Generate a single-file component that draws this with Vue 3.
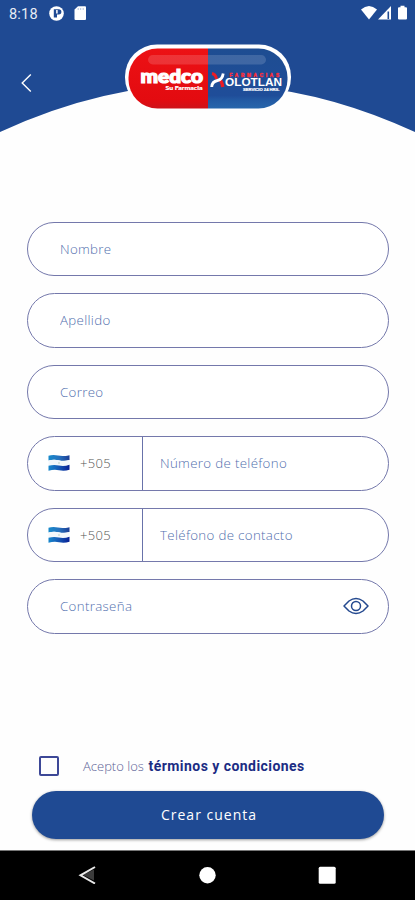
<script setup>
import { ref } from 'vue'

const fields = [
  { id: 'nombre', label: 'Nombre', type: 'text' },
  { id: 'apellido', label: 'Apellido', type: 'text' },
  { id: 'correo', label: 'Correo', type: 'email' },
  { id: 'telefono', label: 'Número de teléfono', type: 'tel', prefix: '+505' },
  { id: 'contacto', label: 'Teléfono de contacto', type: 'tel', prefix: '+505' },
  { id: 'clave', label: 'Contraseña', type: 'password', secret: true },
]
const accepted = ref(false)
const visible = ref(false)
</script>

<template>
  <div class="screen">
    <header class="header">
      <svg class="curve" viewBox="0 0 415 133" aria-hidden="true">
        <path d="M0 0H415V132Q207.500 36 0 132Z" fill="#1f4a93" />
      </svg>
      <div class="status">
        <span class="time">8:18</span>
        <svg class="status-left" viewBox="0 0 40 16">
          <circle cx="7.500" cy="8.500" r="7.300" fill="#fff" />
          <path d="M4.800 4.200h5a2.500 2.500 0 0 1 0 5.200H8v3H4.800z" fill="#1f4a93" />
          <path d="M7.900 5v3.600" stroke="#fff" stroke-width="1.500" />
          <path d="M29 1.200H36q1 0 1 1V14q0 1-1 1H26.500q-1 0-1-1V4.500z" fill="#fff" />
          <path d="M29.200 3v2M31.700 3v2M34.200 3v2" stroke="#9eb2d6" stroke-width=".8" />
        </svg>
        <svg class="status-right" viewBox="0 0 48 16">
          <path d="M0 4.500Q8 -2.500 16 4.500L8 14.500Z" fill="#fff" />
          <path d="M17 14.500L30 1V14.500Z" fill="#fff" />
          <path d="M27.300 6.500V14" stroke="#1f4a93" stroke-width="1.600" />
          <path d="M39.500 .7h4v1.600h1.500q1 0 1 1V13.500q0 1-1 1h-7q-1 0-1-1V3.300q0-1 1-1h1.500z" fill="#fff" />
        </svg>
      </div>
      <div class="brand-row">
        <button class="back" type="button" aria-label="Volver">
          <svg viewBox="0 0 12 20"><path d="M10.800 1.500L2.200 10L10.800 18.500" fill="none" stroke="#fff" stroke-width="1.400" /></svg>
        </button>
        <svg class="logo" viewBox="0 0 168 66">
          <defs>
            <clipPath id="capsule"><rect x="4.500" y="4.500" width="159" height="60" rx="29" /></clipPath>
            <linearGradient id="redFill" x2="0" y2="1">
              <stop offset="0" stop-color="#ed1215" />
              <stop offset=".85" stop-color="#e30b10" />
              <stop offset="1" stop-color="#c9131b" />
            </linearGradient>
            <linearGradient id="blueFill" x2="0" y2="1">
              <stop offset="0" stop-color="#1e4d91" />
              <stop offset=".78" stop-color="#1f4d99" />
              <stop offset=".86" stop-color="#235ba4" />
              <stop offset="1" stop-color="#2969ad" />
            </linearGradient>
          </defs>
          <rect x="1" y=".5" width="166" height="65" rx="32" fill="#fff" />
          <g clip-path="url(#capsule)">
            <rect width="84" height="66" fill="url(#redFill)" />
            <rect x="84" width="84" height="66" fill="url(#blueFill)" />
          </g>
          <rect x="24" y="11" width="118" height="9.500" rx="4.700" fill="#fff" opacity=".15" />
          <text class="medco" x="16.500" y="38.500" textLength="62.500" lengthAdjust="spacingAndGlyphs">medco</text>
          <text class="tagline" x="41.500" y="45.500" textLength="37" lengthAdjust="spacingAndGlyphs">Su Farmacia</text>
          <text class="farmacias" x="105.500" y="33.100" textLength="49.500">FARMACIAS</text>
          <path d="M88 29.500Q91.500 30 92.500 35" stroke="#ed1b24" stroke-width="3" fill="none" />
          <path d="M95.500 36Q98 37 98.700 43" stroke="#ed1b24" stroke-width="3.400" fill="none" />
          <path d="M87.700 43Q88 37.500 93.500 36.500Q98.500 35.500 99.200 29.500" stroke="#fff" stroke-width="2.800" fill="none" />
          <text class="xolotlan" x="101" y="42.300" textLength="57" lengthAdjust="spacingAndGlyphs">OLOTLAN</text>
          <text class="slogan" x="119" y="46.800" textLength="36.500" lengthAdjust="spacingAndGlyphs">SERVICIO 24 HRS.</text>
        </svg>
      </div>
    </header>

    <form class="form" @submit.prevent>
      <div v-for="f in fields" :key="f.id" class="field">
        <div v-if="f.prefix" class="prefix">
          <svg class="flag" viewBox="0 0 22 18">
            <defs>
              <linearGradient id="flagBlue">
                <stop offset="0" stop-color="#168acb" />
                <stop offset=".5" stop-color="#2672bf" />
                <stop offset="1" stop-color="#1d3e95" />
              </linearGradient>
              <linearGradient id="flagDeep">
                <stop offset="0" stop-color="#1687cc" />
                <stop offset=".5" stop-color="#1557b5" />
                <stop offset="1" stop-color="#071f94" />
              </linearGradient>
            </defs>
            <path d="M.5 1.800Q5 .5 10 1.600T21.500 1.200V6Q16 7.500 11 6.300T.5 6.500Z" fill="url(#flagBlue)" />
            <path d="M.5 6.500Q6 5 11 6.500T21.500 6V11Q16 12.500 11 11.500T.5 12Z" fill="#f3f7fb" />
            <path d="M.5 11.800Q6 10.300 11 11.600T21.500 10.800V15.800Q16 17.300 11 16.200T.5 16.800Z" fill="url(#flagDeep)" />
            <circle cx="11" cy="9" r=".8" fill="#b7cfbf" />
          </svg>
          <span>{{ f.prefix }}</span>
        </div>
        <input
          :class="{ phone: f.prefix }"
          :type="f.secret && visible ? 'text' : f.type"
          :placeholder="f.label"
          :aria-label="f.label"
        />
        <button v-if="f.secret" class="eye" type="button" aria-label="Mostrar" @click="visible = !visible">
          <svg viewBox="0 0 26 18" fill="none" stroke="#24498f" stroke-width="1.500">
            <path d="M1 9L6 4Q9.500 1.500 13 1.500T20 4L25 9L20 14Q16.500 16.500 13 16.500T6 14Z" stroke-linejoin="round" />
            <circle cx="13" cy="9" r="4.500" />
          </svg>
        </button>
      </div>

      <label class="terms">
        <input v-model="accepted" type="checkbox" />
        <span class="accept">Acepto los</span>
        <strong>términos y condiciones</strong>
      </label>
      <button class="submit" type="submit">Crear cuenta</button>
    </form>

    <nav class="navbar">
      <svg viewBox="0 0 18 18">
        <path d="M16 3.500L5 9L16 14.500Z" fill="#3b3b3b" />
        <path d="M17 1L2.500 9.300L17 17.500" fill="none" stroke="#e8e8e8" stroke-width="2" />
      </svg>
      <svg viewBox="0 0 18 18"><circle cx="9.500" cy="9.300" r="8.200" fill="#fff" /></svg>
      <svg viewBox="0 0 18 18"><rect x=".7" y=".8" width="17" height="17" rx="1.500" fill="#fff" /></svg>
    </nav>
  </div>
</template>

<style>
body {
  background: #fff;
}
</style>

<style scoped>
.screen {
  width: 415px;
  height: 900px;
  display: flex;
  flex-direction: column;
  overflow: hidden;
  background: #fefefe;
  font-family: "Open Sans", "Noto Sans", sans-serif;
}
.screen * {
  box-sizing: border-box;
}
svg {
  display: block;
}
button {
  border: 0;
  background: none;
  padding: 0;
  font: inherit;
}
.header {
  position: relative;
  height: 221.5px;
  flex: none;
}
.curve {
  position: absolute;
  inset: 0 0 auto;
  width: 415px;
  height: 133px;
}
.status,
.brand-row {
  position: relative;
  display: flex;
}
.status {
  height: 44px;
  padding: 5px 6px 0 9px;
}
.time {
  width: 40px;
  font: 14.5px/19px Roboto, sans-serif;
  letter-spacing: 0.2px;
  color: #e7ecf5;
}
.status-left {
  width: 40px;
  height: 16px;
}
.status-right {
  width: 48px;
  height: 16px;
  margin-left: auto;
}
.brand-row {
  padding-left: 20px;
}
.back {
  width: 104px;
  height: 66px;
  padding: 12px 0 0 0;
}
.back svg {
  width: 12px;
  height: 20px;
}
.logo {
  width: 168px;
  height: 66px;
}
.medco {
  font: 900 18px "Lato", sans-serif;
  fill: #fff;
  stroke: #fff;
  stroke-width: 1.2px;
}
.tagline {
  font: 900 6.4px "Lato", sans-serif;
  fill: #fff;
  stroke: #fff;
  stroke-width: 0.2px;
}
.farmacias {
  font: bold 4.6px "Liberation Sans", sans-serif;
  fill: #f5303c;
  stroke: #f5303c;
  stroke-width: 0.5px;
}
.xolotlan {
  font: bold 11px "Liberation Sans", sans-serif;
  fill: #fff;
}
.slogan {
  font: bold 3.8px "Liberation Sans", sans-serif;
  fill: #fff;
  stroke: #fff;
  stroke-width: 0.2px;
}
.form {
  height: 628px;
  flex: none;
  padding: 0 26px 0 27px;
}
.field {
  height: 54.5px;
  margin-bottom: 17px;
  display: flex;
  align-items: center;
  border: 1px solid #7478ab;
  border-radius: 28px;
  background: #fff;
}
.field input {
  flex: 1;
  min-width: 0;
  height: 40px;
  padding: 0 0 0 32px;
  border: 0;
  outline: 0;
  background: none;
  font: 300 13.3px "Open Sans", sans-serif;
  letter-spacing: 0.33px;
  color: #24498f;
}
.field input.phone {
  padding-left: 17.5px;
}
.field input::placeholder {
  color: #526fae;
  opacity: 1;
}
.prefix {
  width: 114.5px;
  align-self: stretch;
  display: flex;
  align-items: center;
  gap: 10px;
  padding-left: 20px;
  border-right: 1px solid #6872aa;
  font-size: 13px;
  font-weight: 300;
  letter-spacing: 0.3px;
  color: #555;
}
.flag {
  width: 22px;
  height: 18px;
}
.eye {
  width: 26px;
  margin-right: 19.5px;
}
.eye svg {
  width: 26px;
  height: 18px;
}
.terms {
  display: flex;
  align-items: center;
  height: 24px;
  margin: 120px 0 13px 12px;
  font-size: 13px;
  white-space: nowrap;
}
.terms input {
  appearance: none;
  width: 20px;
  height: 20px;
  margin: 0 24px 0 0;
  border: 2px solid #3d4897;
  border-radius: 2px;
}
.accept {
  width: 65.5px;
  font-weight: 300;
  color: #5b6296;
}
.terms strong {
  font: 700 14px Roboto, sans-serif;
  letter-spacing: 0.45px;
  color: #1b2c83;
}
.submit {
  display: block;
  width: 352px;
  height: 48px;
  margin-left: 5px;
  padding-left: 2px;
  border-radius: 24px;
  background: #1f4a93;
  box-shadow: 0 1px 3px rgba(0, 0, 0, 0.4);
  color: #fff;
  font-size: 14px;
  font-weight: 400;
  letter-spacing: 1px;
}
.navbar {
  flex: 1;
  display: flex;
  justify-content: space-between;
  align-items: center;
  padding: 0 79px 0 78px;
  border-top: 1px solid #777;
  background: #000;
}
.navbar svg {
  width: 18px;
  height: 18px;
}
</style>
